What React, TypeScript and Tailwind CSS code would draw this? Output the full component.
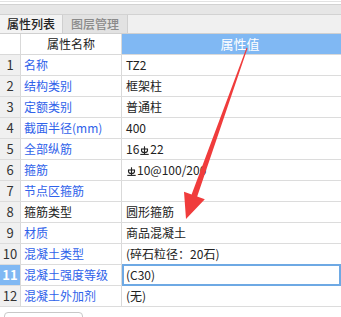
import React from "react";

const Rebar = () => (
  <svg width="9" height="9" viewBox="0 0 9 9" className="inline-block align-top mt-[2px] mx-[1px]">
    <g stroke="#222" strokeWidth="1.1" fill="none">
      <line x1="4.5" y1="0.3" x2="4.5" y2="8" />
      <line x1="1" y1="3" x2="8" y2="3" />
      <path d="M1.5 3 V4.6 Q1.5 6.6 4.5 6.6 Q7.5 6.6 7.5 4.6 V3" />
      <line x1="0.3" y1="8.4" x2="8.7" y2="8.4" />
    </g>
  </svg>
);

type Row = { n: number; name: string; value: React.ReactNode; black?: boolean; sel?: boolean };

const rows: Row[] = [
  { n: 1, name: "名称", value: "TZ2" },
  { n: 2, name: "结构类别", value: "框架柱" },
  { n: 3, name: "定额类别", value: "普通柱" },
  { n: 4, name: "截面半径(mm)", value: "400" },
  { n: 5, name: "全部纵筋", value: <>16<Rebar />22</> },
  { n: 6, name: "箍筋", value: <><Rebar />10@100/200</> },
  { n: 7, name: "节点区箍筋", value: "" },
  { n: 8, name: "箍筋类型", value: "圆形箍筋", black: true },
  { n: 9, name: "材质", value: "商品混凝土" },
  { n: 10, name: "混凝土类型", value: "(碎石粒径：20石)" },
  { n: 11, name: "混凝土强度等级", value: "(C30)", sel: true },
  { n: 12, name: "混凝土外加剂", value: "(无)" },
];

export default function App() {
  return (
    <div
      className="relative w-[341px] h-[317px] bg-white overflow-hidden text-[12px] text-[#222]"
      style={{ fontFamily: '"Noto Sans CJK SC", "Noto Sans", sans-serif' }}
    >
      <div className="flex flex-col h-[307px] overflow-hidden">
        <div className="h-[1px] bg-white" />
        <div className="h-[1px] bg-[#e2e2e2]" />
        <div className="h-[3px] bg-white" />
        <div className="h-[13px] bg-[#e6e6e6] border-t border-b border-[#d2d2d2]" />
        <div className="flex h-[23px] bg-[#f0f0f0] border-b border-[#d0d0d0]">
          <div className="w-[62px] flex items-center justify-center bg-[#f3f3f3] text-[#222] font-medium">属性列表</div>
          <div className="w-[66px] flex items-center justify-center bg-[#e2e2e2] border-l border-r border-[#cfcfcf] text-[#8a8a8a] font-medium">图层管理</div>
          <div className="flex-1" />
        </div>
        <div className="flex h-[21px] border-b border-[#d9d9d9] shrink-0">
          <div className="w-[21px] border-r border-[#d9d9d9] bg-white" />
          <div className="w-[101px] border-r border-[#d9d9d9] bg-white flex items-center justify-center">属性名称</div>
          <div className="flex-1 bg-[#80b8f3] text-white flex items-center justify-center pl-[17px] text-[13px]">属性值</div>
        </div>
        {rows.map((r) => (
          <div key={r.n} className="flex h-[21px] border-b border-[#dcdcdc] shrink-0">
            <div
              className={
                r.sel
                  ? "w-[21px] border-r border-[#d9d9d9] bg-[#80b8f3] text-white font-bold flex items-center justify-center text-[13px]"
                  : "w-[21px] border-r border-[#d9d9d9] bg-[#f0f0f0] text-[#333] flex items-center justify-center text-[13px]"
              }
            >
              {r.n}
            </div>
            <div
              className={
                r.black
                  ? "w-[101px] border-r border-[#d9d9d9] flex items-center pl-[3px] text-[#222] whitespace-nowrap"
                  : "w-[101px] border-r border-[#d9d9d9] flex items-center pl-[3px] text-[#2f62ea] whitespace-nowrap"
              }
            >
              {r.name}
            </div>
            <div
              className={
                r.sel
                  ? "flex-1 flex items-center pl-[4px] -my-px shadow-[inset_0_0_0_2px_#6ea9e4] whitespace-nowrap"
                  : "flex-1 flex items-center pl-[4px] whitespace-nowrap"
              }
            >
              {r.value}
            </div>
          </div>
        ))}
      </div>
      <div className="h-[10px] bg-white pt-[5px] pl-[4px]">
        <div className="w-[79px] h-[12px] rounded-[4px] border border-[#c8c8c8]" />
      </div>
      <svg className="absolute left-0 top-0 pointer-events-none" width="341" height="317">
        <polygon
          fill="#f03c3c"
          points="246.5,47.8 247.5,48.2 197.2,196.5 204.8,199.2 186,219 184,191.8 191.6,194.5"
        />
      </svg>
    </div>
  );
}
